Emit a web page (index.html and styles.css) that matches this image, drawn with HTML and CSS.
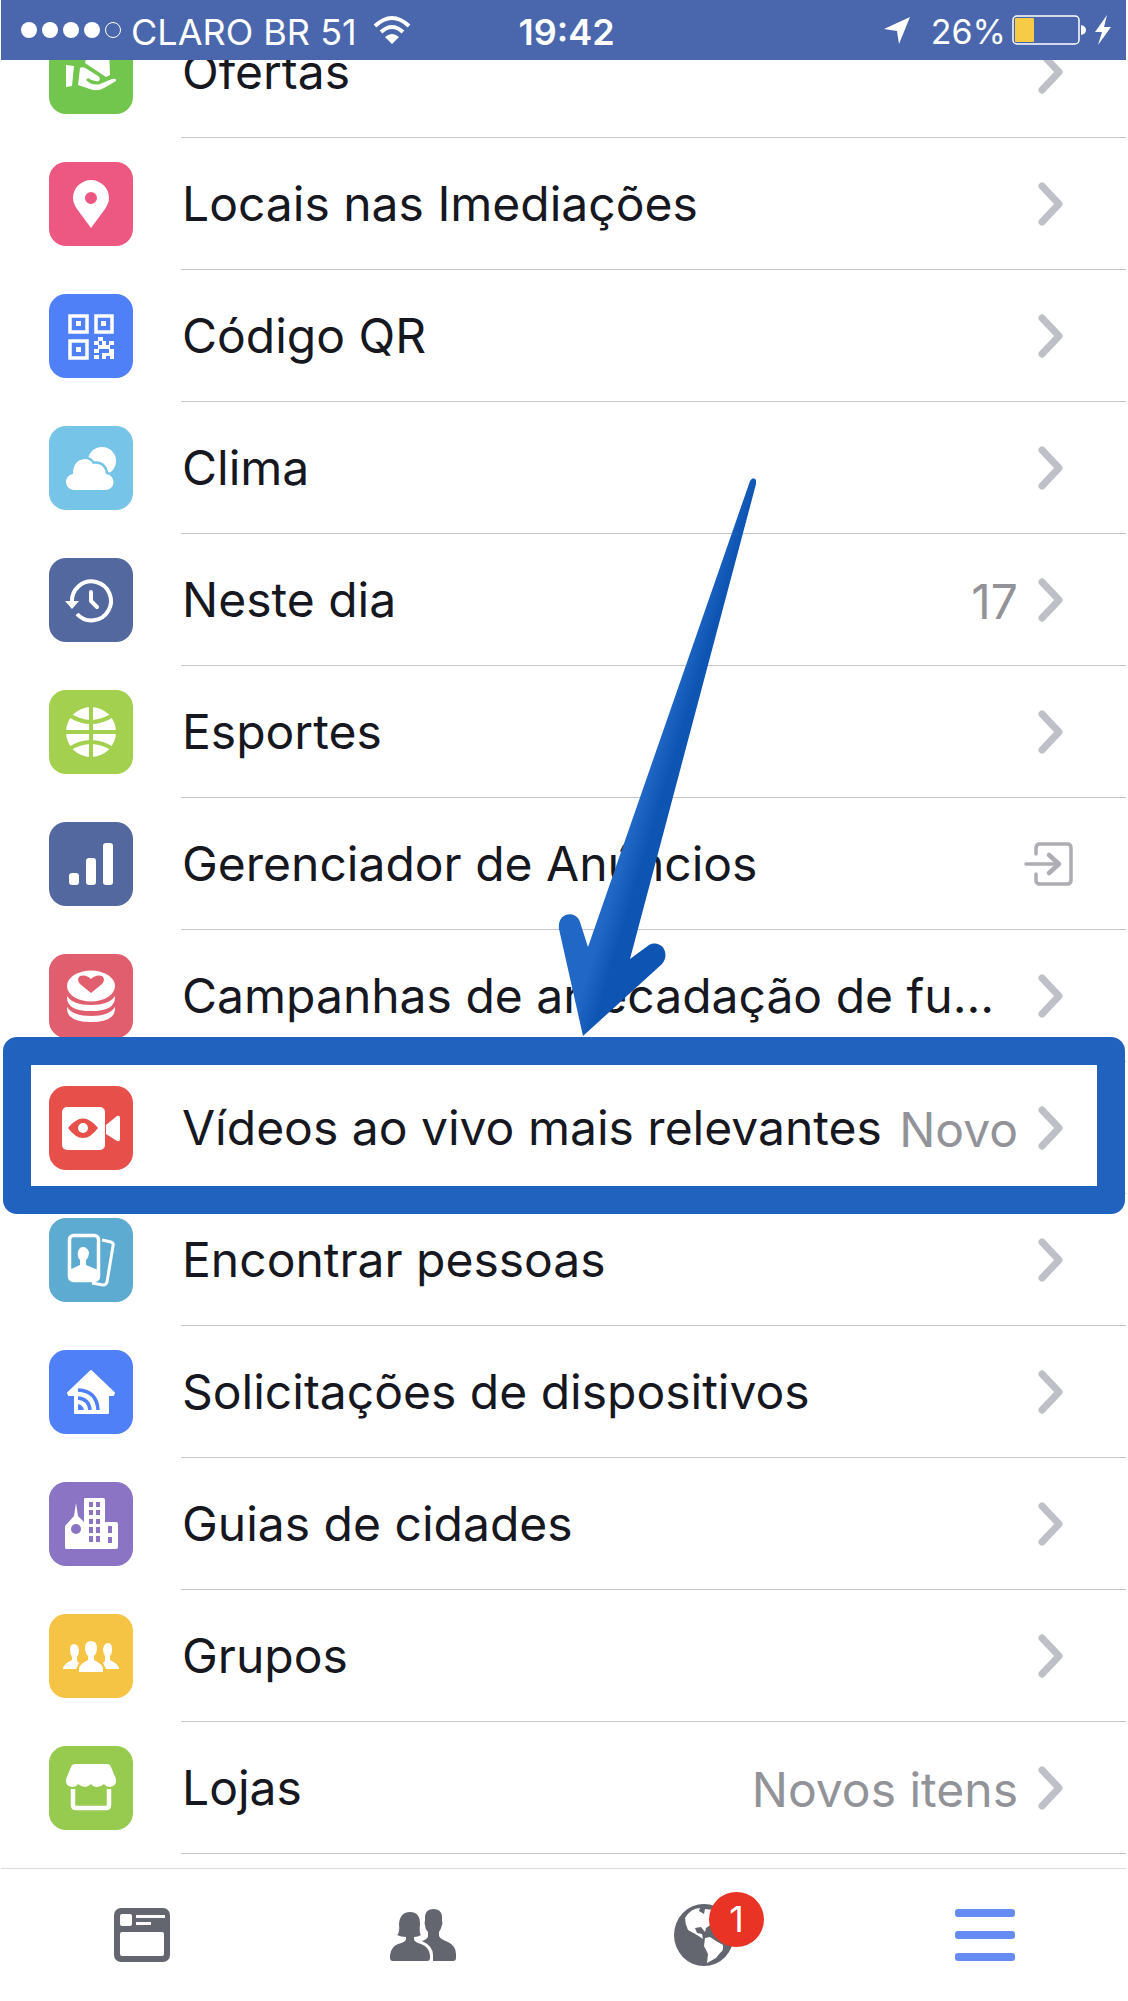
FILE: index.html
```html
<!DOCTYPE html>
<html lang="pt-BR">
<head>
<meta charset="utf-8">
<meta name="viewport" content="width=device-width, initial-scale=1">
<title>Menu</title>
<link rel="stylesheet" href="styles.css">
</head>
<body>
<svg class="defs" aria-hidden="true">
  <symbol id="chevron" viewBox="0 0 35 44"><path d="M4 4L21 22L4 40" fill="none" stroke="#bfc0c7" stroke-width="7" stroke-linecap="round" stroke-linejoin="round"/></symbol>
</svg>

<header class="status">
  <div class="status-side">
    <span class="signal"><i class="dot"></i><i class="dot"></i><i class="dot"></i><i class="dot"></i><i class="dot dot-empty"></i></span>
    <span class="carrier">CLARO BR 51</span>
    <svg class="wifi" viewBox="0 0 38 30" width="38" height="30"><g fill="none" stroke="#fff" stroke-width="4"><path d="M2 11Q19 -5 36 11"/><path d="M8 17Q19 7 30 17"/></g><path d="M12 22Q19 16 26 22L19 29Z" fill="#fff"/></svg>
  </div>
  <time class="clock">19:42</time>
  <div class="status-side status-right">
    <svg class="locate" viewBox="0 0 28 28" width="28" height="28"><path d="M27 1L16 28L14 15L1 13Z" fill="#fff"/></svg>
    <span class="percent">26%</span>
    <svg class="battery" viewBox="0 0 74 30" width="74" height="30"><rect x="1" y="1" width="66" height="28" rx="4" fill="none" stroke="#fff" stroke-width="1.5"/><rect x="3" y="3" width="19" height="24" rx="1" fill="#f7cb46"/><path d="M69 10Q74 11 74 15T69 20Z" fill="#fff"/></svg>
    <svg class="bolt" viewBox="0 0 18 30" width="18" height="30"><path d="M13 0L1 17H8L4 30L17 12H10Z" fill="#fff"/></svg>
  </div>
</header>

<main class="content">
<nav class="menu" aria-label="Menu">
  <a class="row" href="#">
    <svg class="icon green" viewBox="0 0 84 84"><g fill="#fff"><path d="M17 35L25 36L23 56L17 57Z"/><path d="M39 20H60L61 45L57 47L36 33Z"/><path d="M31 38Q34 36 38 39L49 46Q52 48 50 51Q44 52 39 48L37 50Q43 56 51 54L63 49Q68 48 67 51L55 58Q48 62 41 59L29 55Z"/></g></svg>
    <span class="entry"><span class="label">Ofertas</span><svg class="chevron"><use href="#chevron"/></svg></span>
  </a>
  <a class="row" href="#">
    <svg class="icon pink" viewBox="0 0 84 84"><path fill="#fff" fill-rule="evenodd" d="M42 66L28 47Q24 41 24 36A18 18 0 0 1 60 36Q60 41 56 47ZM42 30a6 6 0 1 0 0 12a6 6 0 0 0 0-12Z"/></svg>
    <span class="entry"><span class="label">Locais nas Imediações</span><svg class="chevron"><use href="#chevron"/></svg></span>
  </a>
  <a class="row" href="#">
    <svg class="icon blue" viewBox="0 0 84 84"><g fill="none" stroke="#fff" stroke-width="3.5"><path d="M21 22H38V38H21ZM47 22H63V38H47ZM21 47H38V64H21Z"/></g><path fill="#fff" d="M27 27h5v5h-5zM52 27h5v5h-5zM27 53h5v5h-5zM49 43h5v4h-5zM45 47h5v4h-5zM53 47h4v4h-4zM60 47h5v4h-5zM49 51h12v4h-12zM45 55h5v4h-5zM45 61h5v4h-5zM53 59h8v3h-8zM53 61h4v4h-4zM60 55h5v10h-4v-5h-1z"/></svg>
    <span class="entry"><span class="label">Código QR</span><svg class="chevron"><use href="#chevron"/></svg></span>
  </a>
  <a class="row" href="#">
    <svg class="icon sky" viewBox="0 0 84 84"><circle cx="53" cy="35" r="14" fill="#fff"/><path d="M26 64A8 8 0 0 1 24 48Q24 34 36 33Q41 33 44 38Q55 36 57 48A8 8 0 0 1 56 64Z" fill="#fff" stroke="#76c5e8" stroke-width="5" paint-order="stroke"/></svg>
    <span class="entry"><span class="label">Clima</span><svg class="chevron"><use href="#chevron"/></svg></span>
  </a>
  <a class="row" href="#">
    <svg class="icon navy" viewBox="0 0 84 84"><g fill="none" stroke="#fff" stroke-width="4"><path d="M23 44A19.500 19.500 0 1 1 28 56"/><path d="M42 34V43L48 49" stroke-linecap="round" stroke-linejoin="round"/></g><path d="M16 43H30L23 51Z" fill="#fff"/></svg>
    <span class="entry"><span class="label">Neste dia</span><span class="value">17</span><svg class="chevron"><use href="#chevron"/></svg></span>
  </a>
  <a class="row" href="#">
    <svg class="icon lime" viewBox="0 0 84 84"><circle cx="42" cy="42" r="25" fill="#fff"/><g fill="none" stroke="#a3d14f" stroke-width="4"><path d="M42 16V68M16 42H68M20 25Q42 39 64 25M20 59Q42 45 64 59"/></g></svg>
    <span class="entry"><span class="label">Esportes</span><svg class="chevron"><use href="#chevron"/></svg></span>
  </a>
  <a class="row" href="#">
    <svg class="icon navy" viewBox="0 0 84 84"><g fill="#fff"><rect x="20" y="51" width="10" height="12" rx="3"/><rect x="37" y="36" width="10" height="27" rx="3"/><rect x="54" y="21" width="10" height="42" rx="3"/></g></svg>
    <span class="entry"><span class="label">Gerenciador de Anúncios</span><svg class="export" viewBox="0 0 49 44"><g fill="none" stroke="#adadb3" stroke-width="3.500" stroke-linecap="round" stroke-linejoin="round"><path d="M12 12V6Q12 2 16 2H43Q47 2 47 6V38Q47 42 43 42H16Q12 42 12 38V32"/><path d="M2 22H35"/><path d="M25 13L35 22L25 31" stroke-width="4.500"/></g></svg></span>
  </a>
  <a class="row" href="#">
    <svg class="icon rose" viewBox="0 0 84 84"><g fill="#fff"><ellipse cx="42" cy="32" rx="24" ry="15.500"/><path d="M18 42Q24 51 42 51T66 42Q67 57 42 57T18 42ZM18 53Q24 62 42 62T66 53Q67 68 42 68T18 53Z"/></g><path fill="#e05e6d" d="M42 39L31 30Q27 25 31 22Q37 20 42 25Q47 20 53 22Q57 25 53 30Z"/></svg>
    <span class="entry"><span class="label">Campanhas de arrecadação de fu...</span><svg class="chevron"><use href="#chevron"/></svg></span>
  </a>
  <a class="row row-marked" href="#">
    <svg class="icon red" viewBox="0 0 84 84"><rect x="13" y="21" width="43" height="43" rx="5" fill="#fff"/><path d="M57 39L68 30Q71 29 71 32V53Q71 56 68 55L57 48Z" fill="#fff"/><path d="M19 42Q34 23 49 42Q34 62 19 42Z" fill="#e64f4a"/><circle cx="34" cy="42" r="5" fill="#fff"/></svg>
    <span class="entry"><span class="label">Vídeos ao vivo mais relevantes</span><span class="value">Novo</span><svg class="chevron"><use href="#chevron"/></svg></span>
    <svg class="arrow" viewBox="0 0 210 564" aria-hidden="true"><defs><linearGradient id="shade" gradientUnits="userSpaceOnUse" x1="98" y1="302" x2="118" y2="308"><stop offset="0" stop-color="#2167c6"/><stop offset="1" stop-color="#0d54b3"/></linearGradient></defs><path fill="url(#shade)" d="M201 7Q204 2 207 6V10L81 485L100 471C112 465 122 479 113 490L34 562L10 455C8 438 27 436 31 448L39 473Z"/></svg>
  </a>
  <a class="row" href="#">
    <svg class="icon teal" viewBox="0 0 84 84"><rect x="20.500" y="17.500" width="29" height="45" rx="4" fill="none" stroke="#fff" stroke-width="3.500"/><path fill="#fff" d="M20 52L31 47V42Q28 39 29 34Q30 29 34 29T40 34Q40 39 37 42V47L49 52V61H20Z"/><path fill="none" stroke="#fff" stroke-width="3" stroke-linejoin="round" d="M53 22L62 24Q65 25 64 28L58 64Q57 67 54 67L43 65"/></svg>
    <span class="entry"><span class="label">Encontrar pessoas</span><svg class="chevron"><use href="#chevron"/></svg></span>
  </a>
  <a class="row" href="#">
    <svg class="icon blue" viewBox="0 0 84 84"><path fill="#fff" stroke="#fff" stroke-width="2" stroke-linejoin="round" d="M42 21L65 43L64 45H59V63H26V45H20L19 43Z"/><g fill="none" stroke="#4f80f7" stroke-width="3.500"><path d="M29 40Q48 41 49 60M29 48Q40 49 41 60"/></g><path d="M29 54Q34 55 35 60H29Z" fill="#4f80f7"/></svg>
    <span class="entry"><span class="label">Solicitações de dispositivos</span><svg class="chevron"><use href="#chevron"/></svg></span>
  </a>
  <a class="row" href="#">
    <svg class="icon purple" viewBox="0 0 84 84"><path fill="#fff" d="M17 67Q16 67 16 65V44L25 34L27 21L29 34L35 40V17Q35 16 37 16H54Q56 16 56 18V40H67Q69 40 69 42V65Q69 67 67 67Z"/><circle cx="27" cy="47" r="5" fill="#8b74c3"/><path fill="#8b74c3" d="M40 20h4v5h-4zM47 20h4v5h-4zM40 28h4v5h-4zM47 28h4v5h-4zM40 37h4v5h-4zM47 37h4v5h-4zM40 45h4v6h-4zM47 45h4v6h-4zM40 54h4v6h-4zM47 54h4v6h-4zM59 44h4v7h-4zM59 55h4v6h-4z"/></svg>
    <span class="entry"><span class="label">Guias de cidades</span><svg class="chevron"><use href="#chevron"/></svg></span>
  </a>
  <a class="row" href="#">
    <svg class="icon yellow" viewBox="0 0 84 84"><g fill="#fff"><path d="M30 58V54Q31 50 39 46V42Q36 39 36 34Q36 27 42 27T48 34Q48 39 45 42V46Q53 50 54 54V58Z"/><path d="M14 55Q14 50 23 46V43Q21 40 21 36Q21 30 25 30T30 36Q30 40 28 43V47L30 49L27 55Z"/><path d="M70 55Q70 50 61 46V42Q63 40 63 35Q63 29 59 29T54 35Q54 39 56 42V47L54 49L57 55Z"/></g></svg>
    <span class="entry"><span class="label">Grupos</span><svg class="chevron"><use href="#chevron"/></svg></span>
  </a>
  <a class="row" href="#">
    <svg class="icon leaf" viewBox="0 0 84 84"><path fill="#fff" d="M26 18H58Q61 18 62 21L67 33Q68 40 61 41Q57 41 55 38Q52 41 48 41T42 38Q39 41 36 41T29 38Q27 41 23 41Q16 40 17 33L22 21Q23 18 26 18Z"/><path fill="none" stroke="#fff" stroke-width="4.500" d="M24 43V59Q24 62 27 62H57Q60 62 60 59V43"/></svg>
    <span class="entry"><span class="label">Lojas</span><span class="value">Novos itens</span><svg class="chevron"><use href="#chevron"/></svg></span>
  </a>
</nav>
</main>

<nav class="tabs" aria-label="Abas">
  <a class="tab" href="#" aria-label="Feed"><svg viewBox="0 0 56 54" width="56" height="54"><rect width="56" height="54" rx="7" fill="#63666f"/><g fill="#fff"><rect x="6" y="6" width="12" height="12" rx="2"/><rect x="22" y="7" width="29" height="3"/><rect x="22" y="14" width="15" height="3"/><rect x="6" y="24" width="44" height="24" rx="2"/></g></svg></a>
  <a class="tab" href="#" aria-label="Amigos"><svg viewBox="0 0 66 52" width="66" height="52"><g fill="#63666f"><path d="M43 52V46Q43 37 32 32Q38 30 38 27V23Q35 20 35 16Q34 14 35 12V7Q36 0 43.500 0T52 7V12Q53 14 52 16Q51 20 49 23V27Q50 30 58 33Q66 37 66 45V49Q66 52 63 52Z"/><path d="M0 49V46Q1 38 8 35Q16 33 16 30V28Q11 28 7 26Q10 24 9 15Q10 3 20 3T30 15Q29 24 31 26Q28 28 24 28V30Q24 33 31 35Q39 38 40 46V49Q40 52 37 52H3Q0 52 0 49Z"/></g></svg></a>
  <a class="tab" href="#" aria-label="Notificações"><span class="globe"><svg viewBox="0 0 60 62" width="60" height="62"><ellipse cx="30" cy="31" rx="30" ry="31" fill="#63666f"/><path fill="#fff" d="M11 14Q17 4 26 4L25 7L30 10L31 5L39 6L38 20L32 24L31 28L27 23L21 24L23 29L28 30L29 35L23 31L14 26Q11 20 11 14ZM31 34L36 33L42 37L49 41Q50 46 46 49L42 54L33 59L34 50L30 42Z"/></svg><span class="badge">1</span></span></a>
  <a class="tab" href="#" aria-label="Mais" aria-current="page"><svg viewBox="0 0 60 52" width="60" height="52"><g fill="#668cf4"><rect width="60" height="8" rx="3"/><rect y="22" width="60" height="8" rx="3"/><rect y="44" width="60" height="8" rx="3"/></g></svg></a>
</nav>
</body>
</html>
```
FILE: styles.css
```css
* { box-sizing: border-box; }

body {
  margin: 0;
  padding: 0 2px 0 1px;
  min-height: 100vh;
  display: flex;
  flex-direction: column;
  background: #fff;
  color: #16171f;
  font-family: Inter, "Liberation Sans", sans-serif;
}

a { color: inherit; text-decoration: none; }
svg { display: block; flex: none; }
.defs { display: none; }

/* Status bar */
.status {
  height: 60px;
  padding: 0 14px 0 20px;
  display: grid;
  grid-template-columns: 1fr auto 1fr;
  align-items: center;
  background: #4a67ad;
  color: #fff;
  font-size: 36px;
  line-height: 40px;
}
.status-side { display: flex; align-items: center; }
.status-right { justify-content: flex-end; font-size: 34px; }
.signal { display: flex; gap: 5px; margin-right: 10px; }
.dot { width: 16px; height: 16px; border-radius: 50%; background: #fff; }
.dot-empty { background: none; border: 1px solid #fff; }
.carrier, .clock, .percent { padding-top: 4px; }
.wifi { margin-left: 16px; }
.clock { font-weight: 600; }
.percent { margin: 0 6px 0 20px; }
.bolt { margin-left: 8px; }

/* Menu list, scrolled so that the first row slips under the status bar */
.content { flex: 1; overflow: hidden; padding-bottom: 14px; }
.menu { margin-top: -54px; }
.row {
  position: relative;
  height: 132px;
  padding-left: 48px;
  display: flex;
  align-items: center;
  gap: 48px;
}
.icon { width: 84px; height: 84px; border-radius: 17px; }
.entry {
  flex: 1;
  align-self: stretch;
  padding: 0 53px 0 1px;
  display: flex;
  align-items: center;
  border-bottom: 1px solid #c4c4c8;
  white-space: nowrap;
}
.label { flex: 1; min-width: 0; font-size: 48px; line-height: 60px; }
.value { padding-top: 4px; font-size: 48px; line-height: 60px; color: #929399; }
.chevron { width: 35px; height: 44px; margin-left: 20px; }
.export { width: 49px; height: 44px; }

.green { background: #72c64d; }
.pink { background: #ec5882; }
.blue { background: #4f80f7; }
.sky { background: #76c5e8; }
.navy { background: #5468a0; }
.lime { background: #a3d14f; }
.rose { background: #e05e6d; }
.red { background: #e64f4a; }
.teal { background: #5eabd2; }
.purple { background: #8b74c3; }
.yellow { background: #f5c445; }
.leaf { background: #97cb50; }

/* Annotation over the highlighted row */
.row-marked { z-index: 1; }
.row-marked::after {
  content: "";
  position: absolute;
  inset: -25px 1px -20px 2px;
  border: 28px solid #2162be;
  border-radius: 14px;
  pointer-events: none;
}
.arrow {
  position: absolute;
  left: 548px;
  bottom: 156px;
  width: 210px;
  height: 564px;
  pointer-events: none;
}

/* Bottom tabs */
.tabs {
  height: 133px;
  display: grid;
  grid-template-columns: repeat(4, 1fr);
  border-top: 1px solid #dcdcde;
}
.tab { display: flex; align-items: center; justify-content: center; }
.globe { position: relative; }
.badge {
  position: absolute;
  top: -12px;
  left: 35px;
  width: 55px;
  height: 55px;
  border-radius: 50%;
  background: #e93325;
  color: #fff;
  font-size: 36px;
  line-height: 55px;
  text-align: center;
}
```
